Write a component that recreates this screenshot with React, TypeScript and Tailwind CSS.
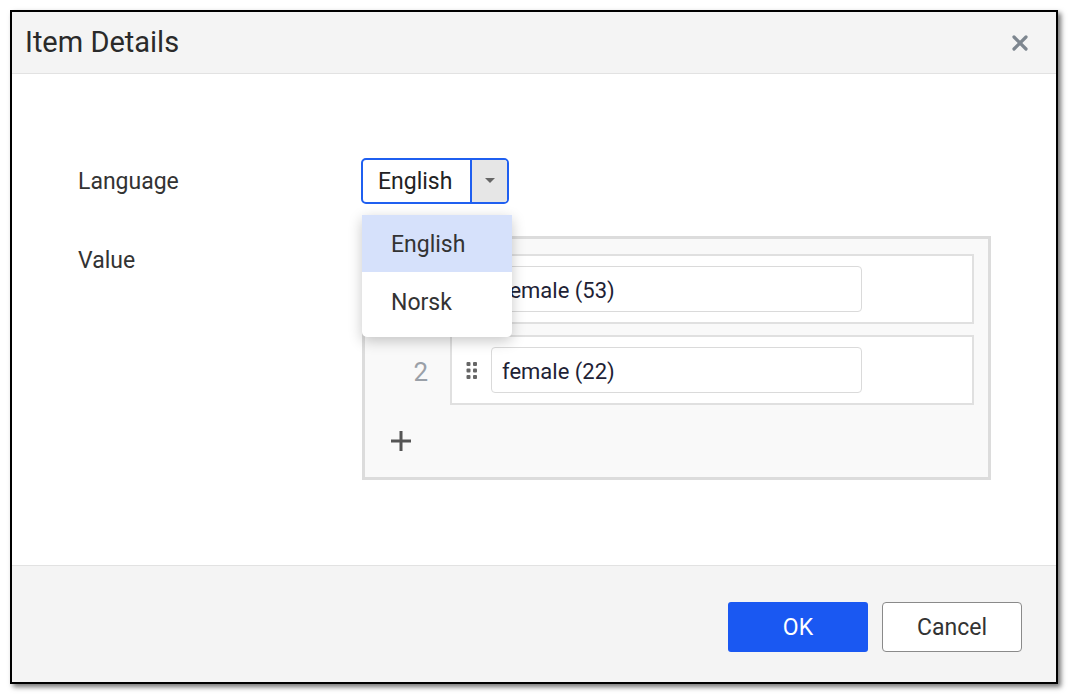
import { X } from 'lucide-react';

const rows = [
  { n: 1, value: 'female (53)' },
  { n: 2, value: 'female (22)' },
];

function DragHandle() {
  return (
    <svg width="12" height="18" viewBox="0 0 12 18" className="shrink-0">
      {[1, 7.5, 14].map((y) =>
        [0.5, 7].map((x) => <rect key={`${x}-${y}`} x={x} y={y} width="4" height="4" rx="1" fill="#666" />)
      )}
    </svg>
  );
}

export default function App() {
  return (
    <div className="min-h-screen bg-white p-[10px] font-['Roboto',sans-serif]">
      <div className="flex h-[674px] w-[1048px] flex-col border-2 border-black bg-white shadow-[3px_3px_5px_rgba(0,0,0,0.55)]">
        <div className="flex h-[62px] shrink-0 items-center justify-between border-b border-[#e2e2e2] bg-[#f4f4f4] pl-[13px] pr-[24px]">
          <h1 className="text-[29px] font-normal text-[#2a2a2a]">Item Details</h1>
          <X size={24} strokeWidth={3.2} className="text-[#7d868f]" />
        </div>

        <div className="flex-1 pt-[84px] pl-[66px]">
          <div className="grid grid-cols-[283px_1fr] gap-y-[32px]">
            <div className="flex h-[46px] items-center pt-[3px] text-[23px] text-[#333]">Language</div>
            <div className="relative">
              <div className="flex h-[46px] w-[148px] overflow-hidden rounded-[5px] border-2 border-[#1f5ff0] bg-white">
                <div className="flex flex-1 items-center pl-[15px] pt-[3px] text-[23px] text-[#222]">English</div>
                <div className="flex w-[37px] items-center justify-center border-l-2 border-[#1f5ff0] bg-[#e6e6e6]">
                  <svg width="10" height="6" viewBox="0 0 10 6">
                    <path d="M0 0h10L5 5z" fill="#666" />
                  </svg>
                </div>
              </div>
              <div className="absolute left-px top-[57px] z-10 w-[150px] overflow-hidden rounded-b-[5px] bg-white pb-[6px] shadow-[0_4px_14px_rgba(0,0,0,0.22)]">
                <div className="flex h-[57px] items-center bg-[#d6e1fb] pl-[29px] pt-[4px] text-[23px] text-[#333]">English</div>
                <div className="flex h-[59px] items-center pl-[29px] pt-[4px] text-[23px] text-[#333]">Norsk</div>
              </div>
            </div>

            <div className="pt-[12px] text-[23px] leading-[26px] text-[#333]">Value</div>
            <div className="ml-px w-[629px] border-[3px] border-[#dcdcdc] bg-[#f9f9f9] pt-[15px] pr-[14px]">
              <div className="flex flex-col gap-[11px]">
                {rows.map((r) => (
                  <div key={r.n} className="flex items-center">
                    <div className="w-[85px] pr-[22px] pt-[4px] text-right text-[26px] text-[#9aa0a8]">{r.n}</div>
                    <div className="flex h-[70px] flex-1 items-center gap-[13px] border-2 border-[#e0e0e0] bg-white pl-[14px]">
                      <DragHandle />
                      <div className="flex h-[46px] w-[371px] items-center rounded-[4px] border border-[#dadada] bg-white pl-[10px] pt-[2px] text-[22px] text-[#1e2235]">
                        {r.value}
                      </div>
                    </div>
                  </div>
                ))}
              </div>
              <div className="flex h-[72px] items-center pl-[25px]">
                <svg width="22" height="22" viewBox="0 0 22 22">
                  <path d="M11 1v20M1 11h20" stroke="#555" strokeWidth="3" />
                </svg>
              </div>
            </div>
          </div>
        </div>

        <div className="flex h-[117px] shrink-0 items-center justify-end gap-[14px] border-t border-[#e2e2e2] bg-[#f4f4f4] pr-[34px] pt-[6px]">
          <button className="h-[50px] w-[140px] rounded-[3px] bg-[#1a58f2] pt-[2px] text-[23px] text-white">OK</button>
          <button className="h-[50px] w-[140px] rounded-[4px] border border-[#8a8a8a] bg-white pt-[2px] text-[23px] text-[#333]">Cancel</button>
        </div>
      </div>
    </div>
  );
}
